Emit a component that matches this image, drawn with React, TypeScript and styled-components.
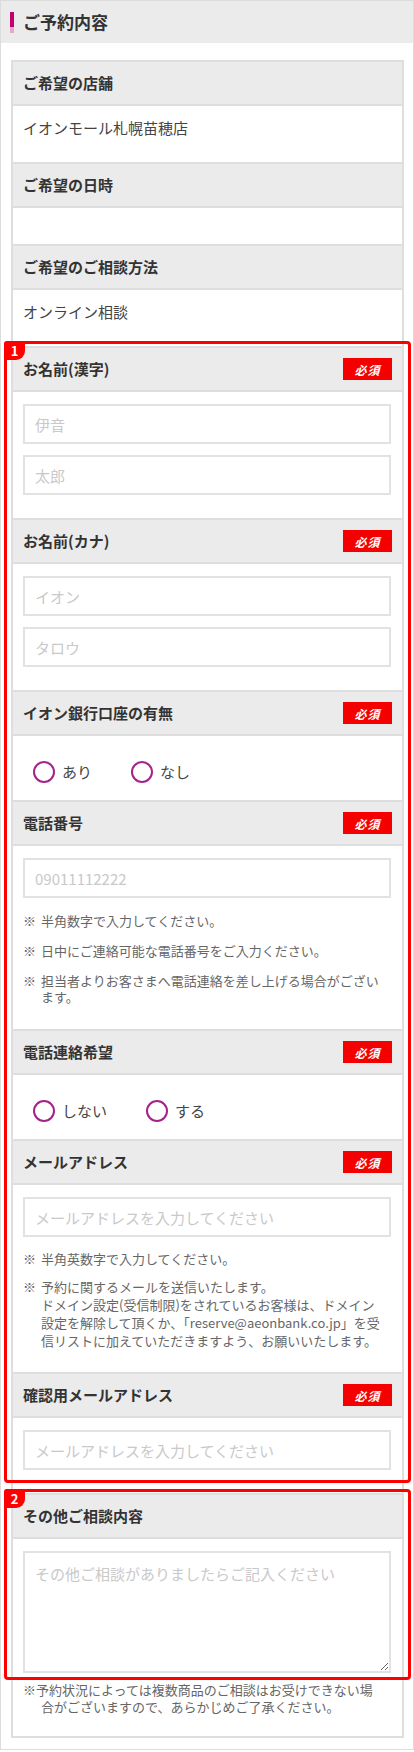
import styled, { createGlobalStyle } from "styled-components";

const GlobalStyle = createGlobalStyle`
  html, body {
    margin: 0;
    padding: 0;
    background: #fff;
  }
  body {
    font-family: "Noto Sans CJK JP", "Noto Sans", sans-serif;
    color: #333;
  }
  * {
    box-sizing: border-box;
  }
`;

function Head({ label, required }: { label: string; required?: boolean }) {
  return (
    <HeadRow>
      <HeadLabel>{label}</HeadLabel>
      {required && <Required>必須</Required>}
    </HeadRow>
  );
}

function Radio({ label }: { label: string }) {
  return (
    <RadioItem>
      <RadioCircle />
      <RadioLabel>{label}</RadioLabel>
    </RadioItem>
  );
}

function Note({ children }: { children: React.ReactNode }) {
  return (
    <NoteItem>
      <NoteMark>※</NoteMark>
      <NoteText>{children}</NoteText>
    </NoteItem>
  );
}

export default function App() {
  return (
    <>
      <GlobalStyle />
      <Page>
        <TitleBar>
          <TitleAccent />
          <TitleText>ご予約内容</TitleText>
        </TitleBar>
        <Content>
          <Card>
            <Head label="ご希望の店舗" />
            <ValueRow>イオンモール札幌苗穂店</ValueRow>
            <Head label="ご希望の日時" />
            <ValueRow />
            <Head label="ご希望のご相談方法" />
            <ValueRow>オンライン相談</ValueRow>

            <Highlight>
              <Head label="お名前(漢字)" required />
              <FieldBody>
                <Field placeholder="伊音" />
                <Field placeholder="太郎" />
              </FieldBody>
              <Head label="お名前(カナ)" required />
              <FieldBody>
                <Field placeholder="イオン" />
                <Field placeholder="タロウ" />
              </FieldBody>
              <Head label="イオン銀行口座の有無" required />
              <RadioRow>
                <Radio label="あり" />
                <Radio label="なし" />
              </RadioRow>
              <Head label="電話番号" required />
              <FieldBody $bottom={24}>
                <Field placeholder="09011112222" />
                <NoteList $leading={16} $gap={14} $top={15}>
                  <Note>半角数字で入力してください。</Note>
                  <Note>日中にご連絡可能な電話番号をご入力ください。</Note>
                  <Note>担当者よりお客さまへ電話連絡を差し上げる場合がございます。</Note>
                </NoteList>
              </FieldBody>
              <Head label="電話連絡希望" required />
              <RadioRow>
                <Radio label="しない" />
                <Radio label="する" />
              </RadioRow>
              <Head label="メールアドレス" required />
              <FieldBody $bottom={22}>
                <Field placeholder="メールアドレスを入力してください" />
                <NoteList $leading={18} $gap={10} $top={13}>
                  <Note>半角英数字で入力してください。</Note>
                  <Note>
                    予約に関するメールを送信いたします。
                    <br />
                    ドメイン設定(受信制限)をされているお客様は、ドメイン設定を解除して頂くか、「reserve@aeonbank.co.jp」を受信リストに加えていただきますよう、お願いいたします。
                  </Note>
                </NoteList>
              </FieldBody>
              <Head label="確認用メールアドレス" required />
              <FieldBody>
                <Field placeholder="メールアドレスを入力してください" />
              </FieldBody>
              <HighlightFrame $top={-7} $bottom={12}>
                <HighlightNumber>1</HighlightNumber>
              </HighlightFrame>
            </Highlight>

            <Highlight>
              <Head label="その他ご相談内容" />
              <AreaBody>
                <Area placeholder="その他ご相談がありましたらご記入ください" />
              </AreaBody>
              <HighlightFrame $top={-6} $bottom={-1}>
                <HighlightNumber>2</HighlightNumber>
              </HighlightFrame>
            </Highlight>

            <FootNote>
              ※予約状況によっては複数商品のご相談はお受けできない場合がございますので、あらかじめご了承ください。
            </FootNote>
          </Card>
        </Content>
      </Page>
    </>
  );
}

const Page = styled.div`
  width: 414px;
  border: 1px solid #dcdcdc;
`;

const TitleBar = styled.div`
  height: 42px;
  display: flex;
  align-items: center;
  padding-left: 9px;
  background: #ebebeb;
`;

const TitleAccent = styled.span`
  width: 4px;
  height: 21px;
  background: linear-gradient(#c2006f 0%, #c2006f 72%, #e9a6cb 72%, #e9a6cb 100%);
`;

const TitleText = styled.h1`
  margin: 0 0 0 9px;
  font-size: 17px;
  line-height: 20px;
  font-weight: 700;
  color: #333;
`;

const Content = styled.div`
  padding: 17px 9px 11px 10px;
`;

const Card = styled.div`
  border: 2px solid #dedede;
`;

const HeadRow = styled.div`
  height: 44px;
  display: flex;
  align-items: center;
  justify-content: space-between;
  padding: 0 10px;
  background: #ebebeb;
  border-bottom: 2px solid #dedede;
`;

const HeadLabel = styled.span`
  font-size: 15px;
  line-height: 20px;
  font-weight: 700;
  color: #333;
`;

const Required = styled.span`
  width: 49px;
  height: 22px;
  display: flex;
  align-items: center;
  justify-content: center;
  background: #f50000;
  color: #fff;
  font-size: 12px;
  font-weight: 700;
  font-style: italic;
  letter-spacing: 1px;
`;

const ValueRow = styled.div`
  min-height: 38px;
  padding: 11px 10px 23px;
  border-bottom: 2px solid #dedede;
  font-size: 15px;
  line-height: 22px;
  color: #444;
`;

const FieldBody = styled.div<{ $bottom?: number }>`
  display: flex;
  flex-direction: column;
  gap: 11px;
  padding: 12px 11px ${(p) => p.$bottom ?? 23}px 10px;
  border-bottom: 2px solid #dedede;
`;

const Field = styled.input`
  width: 100%;
  height: 40px;
  padding: 0 10px;
  border: 2px solid #e2e2e2;
  border-radius: 0;
  outline: none;
  font-family: inherit;
  font-size: 15px;
  color: #444;
  background: #fff;

  &::placeholder {
    color: #c9c9c9;
  }
`;

const NoteList = styled.div<{ $leading: number; $gap: number; $top: number }>`
  display: flex;
  flex-direction: column;
  gap: ${(p) => p.$gap}px;
  margin-top: ${(p) => p.$top - 11}px;
  padding-right: 7px;
  font-size: 13px;
  line-height: ${(p) => p.$leading}px;
  color: #666;
`;

const NoteItem = styled.div`
  display: flex;
`;

const NoteMark = styled.span`
  flex: 0 0 18px;
`;

const NoteText = styled.span`
  flex: 1;
`;

const RadioRow = styled.div`
  display: flex;
  gap: 39px;
  padding: 25px 20px 17px;
  border-bottom: 2px solid #dedede;
`;

const RadioItem = styled.label`
  display: flex;
  align-items: center;
  height: 22px;
`;

const RadioCircle = styled.span`
  width: 22px;
  height: 22px;
  border: 2.5px solid #a5228a;
  border-radius: 50%;
  background: #fff;
`;

const RadioLabel = styled.span`
  margin-left: 7px;
  font-size: 15px;
  line-height: 22px;
  color: #444;
`;

const Highlight = styled.div`
  position: relative;
`;

const HighlightFrame = styled.div<{ $top: number; $bottom: number }>`
  position: absolute;
  top: ${(p) => p.$top}px;
  bottom: ${(p) => p.$bottom}px;
  left: -9px;
  right: -9px;
  border: 3px solid #f00;
  border-radius: 4px;
  pointer-events: none;
  z-index: 1;
`;

const HighlightNumber = styled.span`
  position: absolute;
  top: -3px;
  left: -3px;
  width: 21px;
  height: 19px;
  display: flex;
  align-items: center;
  justify-content: center;
  background: #f00;
  border-radius: 3px 0 9px 0;
  color: #fff;
  font-size: 13px;
  font-weight: 700;
  line-height: 1;
`;

const AreaBody = styled.div`
  padding: 12px 11px 6px 10px;
`;

const Area = styled.textarea`
  display: block;
  width: 100%;
  height: 122px;
  padding: 10px 10px;
  border: 2px solid #e2e2e2;
  border-radius: 0;
  outline: none;
  font-family: inherit;
  font-size: 15px;
  line-height: 22px;
  color: #444;

  &::placeholder {
    color: #c9c9c9;
  }
`;

const FootNote = styled.p`
  margin: 0;
  padding: 2px 20px 21px 28px;
  text-indent: -18px;
  font-size: 13px;
  line-height: 17px;
  color: #666;
`;
